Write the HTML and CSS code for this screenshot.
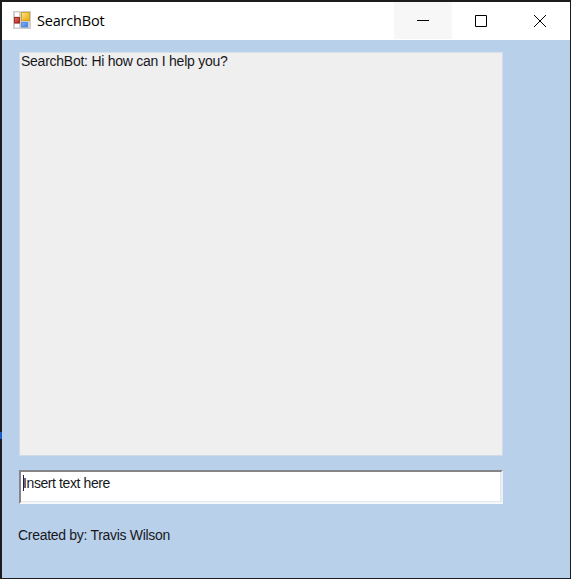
FILE: index.html
```
<!DOCTYPE html>
<html lang="en">
<head>
<meta charset="utf-8">
<title>SearchBot</title>
<link rel="stylesheet" href="styles.css">
</head>
<body>
<div class="window">
  <header class="titlebar">
    <svg class="app-icon" width="18" height="18" viewBox="0 0 18 18">
      <defs>
        <linearGradient id="gold" x1="0" y1="0" x2="1" y2="1"><stop offset="0" stop-color="#ffe48a"/><stop offset="1" stop-color="#e5a800"/></linearGradient>
        <linearGradient id="red" x1="0" y1="0" x2="1" y2="1"><stop offset="0" stop-color="#e0796b"/><stop offset="1" stop-color="#ad2119"/></linearGradient>
        <linearGradient id="blue" x1="0" y1="0" x2="1" y2="1"><stop offset="0" stop-color="#86b8fb"/><stop offset="1" stop-color="#3b78dc"/></linearGradient>
      </defs>
      <rect width="18" height="18" fill="#cfcfcf"/>
      <path d="M2 1.500h4v4H2zM2 13h4v3.500H2z" fill="#fff"/>
      <rect x="1.500" y="6.500" width="5" height="5.500" fill="url(#red)" stroke="#a52b24"/>
      <rect x="8.500" y="1.500" width="8" height="8" fill="url(#gold)" stroke="#d3a02a"/>
      <rect x="8.500" y="11.500" width="6" height="4.500" fill="url(#blue)" stroke="#5b8edb"/>
    </svg>
    <h1 class="title">SearchBot</h1>
    <div class="controls">
      <button class="control hovered" aria-label="Minimize"><svg width="12" height="12" viewBox="0 0 12 12"><path d="M0 5.500h12"/></svg></button>
      <button class="control" aria-label="Maximize"><svg width="12" height="12" viewBox="0 0 12 12"><path d="M.5.5h11v11H.5z"/></svg></button>
      <button class="control" aria-label="Close"><svg width="12" height="12" viewBox="0 0 12 12"><path d="M0 0l12 12M12 0L0 12"/></svg></button>
    </div>
  </header>
  <main class="content">
    <div class="log"><span class="message">SearchBot: Hi how can I help you?</span></div>
    <div class="entry"><span class="caret"></span><span class="entry-text">Insert text here</span></div>
    <p class="credit">Created by: Travis Wilson</p>
  </main>
</div>
</body>
</html>
```

FILE: styles.css
```
* { box-sizing: border-box; }
body {
  margin: 0;
  width: 571px;
  height: 579px;
  padding: 2px 1px 1px 2px;
  background: linear-gradient(#1b5bc4, #1b5bc4) 0 432px / 2px 7px no-repeat #1c1b1d;
  overflow: hidden;
  font: 14px/16px "Liberation Sans", Arial, sans-serif;
  color: #17181c;
}
.window {
  height: 576px;
  display: flex;
  flex-direction: column;
  background: #b9d0ea;
}
.titlebar {
  height: 38px;
  flex: none;
  display: flex;
  align-items: center;
  padding: 0 1px 0 11px;
  background: #fff;
}
.app-icon { flex: none; margin-top: -2px; }
.title {
  margin: 0 0 0 6px;
  font: 14.500px/20px "Open Sans", sans-serif;
  letter-spacing: -0.200px;
  color: #000;
}
.controls { display: flex; align-self: flex-start; margin-left: auto; }
.control {
  display: flex;
  align-items: center;
  justify-content: center;
  width: 58.500px;
  height: 37px;
  padding: 0;
  border: 0;
  background: transparent;
}
.control.hovered { background: #f7f7f7; }
.control svg { fill: none; stroke: #000; stroke-width: 1; }
.content { padding: 12px 0 0 17px; }
.log {
  width: 484px;
  height: 404px;
  padding: 0 1px;
  border: 1px solid #d0dbe8;
  border-top-color: #dae1e9;
  background: #efefef;
}
.message, .entry-text, .credit { display: block; white-space: nowrap; }
.message { letter-spacing: -0.250px; }
.entry {
  display: flex;
  width: 484px;
  height: 34px;
  margin-top: 14px;
  padding: 3px 0 0 2px;
  border: 2px solid;
  border-color: #858585 #eaf0f6 #f6f9fc #858585;
  background: #fff;
  box-shadow: inset -1px -1px #e5e5e5;
}
.caret { width: 1px; height: 16px; margin-right: -1px; background: #17205f; }
.entry-text { letter-spacing: -0.400px; }
.credit { margin: 23px 0 0 -1px; letter-spacing: -0.300px; }
```
